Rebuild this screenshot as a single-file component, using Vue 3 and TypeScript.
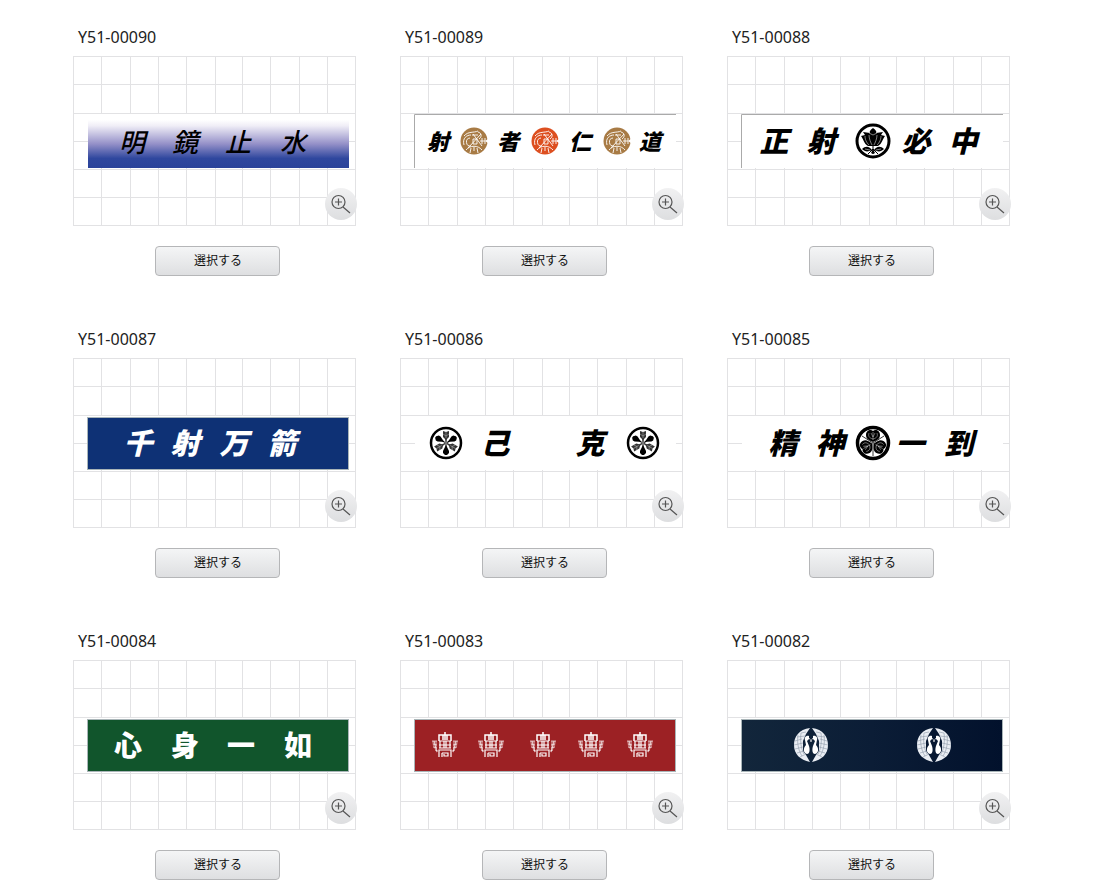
<script setup lang="ts">
type CrestKind = 'seal' | 'tachibana' | 'arrows' | 'aoi' | 'temple' | 'cranes'

interface Glyph {
  char: string
  x: number
}

interface Crest {
  kind: CrestKind
  x: number
  color?: string
}

interface Design {
  id: string
  band: 'fade' | 'outline' | 'blue' | 'plain' | 'green' | 'red' | 'navy'
  tone: 'ink' | 'paper'
  brush: 'thin' | 'small' | 'bold' | 'upright'
  glyphs: Glyph[]
  crests: Crest[]
}

function row(chars: string, xs: number[]): Glyph[] {
  return [...chars].map((char, i) => ({ char, x: xs[i] }))
}

const designs: Design[] = [
  { id: 'Y51-00090', band: 'fade', tone: 'ink', brush: 'thin', glyphs: row('明鏡止水', [59, 112, 165, 220]), crests: [] },
  {
    id: 'Y51-00089', band: 'outline', tone: 'ink', brush: 'small',
    glyphs: row('射者仁道', [38, 108, 180, 250]),
    crests: [
      { kind: 'seal', x: 74, color: '#a87b45' },
      { kind: 'seal', x: 145, color: '#dd4f20' },
      { kind: 'seal', x: 217, color: '#a87b45' },
    ],
  },
  { id: 'Y51-00088', band: 'outline', tone: 'ink', brush: 'bold', glyphs: row('正射必中', [47, 94, 189, 236]), crests: [{ kind: 'tachibana', x: 146 }] },
  { id: 'Y51-00087', band: 'blue', tone: 'paper', brush: 'bold', glyphs: row('千射万箭', [65, 112, 161, 209]), crests: [] },
  { id: 'Y51-00086', band: 'plain', tone: 'ink', brush: 'bold', glyphs: row('己克', [95, 190]), crests: [{ kind: 'arrows', x: 46 }, { kind: 'arrows', x: 243 }] },
  { id: 'Y51-00085', band: 'plain', tone: 'ink', brush: 'bold', glyphs: row('精神一到', [56, 103, 183, 232]), crests: [{ kind: 'aoi', x: 146 }] },
  { id: 'Y51-00084', band: 'green', tone: 'paper', brush: 'upright', glyphs: row('心身一如', [55, 112, 168, 225]), crests: [] },
  {
    id: 'Y51-00083', band: 'red', tone: 'paper', brush: 'bold', glyphs: [],
    crests: [45, 91, 143, 191, 240].map((x) => ({ kind: 'temple' as const, x })),
  },
  { id: 'Y51-00082', band: 'navy', tone: 'paper', brush: 'bold', glyphs: [], crests: [{ kind: 'cranes', x: 84 }, { kind: 'cranes', x: 207 }] },
]

const gridX = [0, 28, 57, 85, 113, 142, 169, 197, 226, 254, 282]
const gridY = [0, 28, 57, 85, 113, 141, 169]
const fills: Record<string, string> = { fade: 'url(#fade)', blue: '#0e3175', green: '#11552c', red: '#9c2124', navy: 'url(#navy)' }
</script>

<template>
  <main class="catalog">
    <svg class="defs" aria-hidden="true">
      <defs>
        <linearGradient id="fade" x1="0" y1="0" x2="0" y2="1">
          <stop offset="0" stop-color="#ffffff" />
          <stop offset="0.12" stop-color="#f0eef7" />
          <stop offset="0.5" stop-color="#9490c8" />
          <stop offset="0.8" stop-color="#2f479e" />
          <stop offset="1" stop-color="#2b439a" />
        </linearGradient>
        <linearGradient id="navy" x1="0" y1="0" x2="1" y2="0">
          <stop offset="0" stop-color="#12263b" />
          <stop offset="0.5" stop-color="#0b1d36" />
          <stop offset="1" stop-color="#02112c" />
        </linearGradient>

        <symbol id="seal" viewBox="-18 -18 36 36" overflow="visible">
          <circle r="13.5" fill="currentColor" />
          <g fill="none" stroke="#fff" stroke-width="0.9">
            <path d="M-10-5C-6-10 0-8 4-10M-10 4C-12-3-7-6-3-6M4-9C8-8 8-4 5-2M-1-7 8 5M7-7-6 7M-2-6H4" />
            <path d="M-4-3A4 4 0 1 0-3 5" />
            <path d="M-8 9C-4 4 4 4 8 9M-3 7-4 12M0 6V10M3 7 4 12M8-3V3M11-3V3M6 0H11" />
            <path d="M-1-2H3V3H-1Z" />
          </g>
          <path d="M14-2 11 0 14 2Z" fill="#fff" />
        </symbol>

        <symbol id="tachibana" viewBox="-18 -18 36 36" overflow="visible">
          <circle r="16" fill="#fff" stroke="#000" stroke-width="3" />
          <path d="M0-13C3-11 4-9 3-8L10-9 8-6 12-5C10-3 9 3 5 5H-5C-9 3-10-3-12-5L-8-6-10-9-3-8C-4-9-3-11 0-13Z" />
          <path d="M-11 8C-7 4-3 6-1 9-5 11-8 11-11 8ZM11 8C7 4 3 6 1 9 5 11 8 11 11 8ZM-2 12 0 8 2 12 0 13Z" />
          <path d="M0 4V13M-5 13 0 8 5 13" fill="none" stroke="#000" />
          <path d="M-8-5C-8 0-5 3-4 4M-4-6C-4-2-2 2-1 4M4-6C4-2 2 2 1 4M8-5C8 0 5 3 4 4M-4-8 0-6 4-8M-8 8-3 9M8 8 3 9" fill="none" stroke="#fff" stroke-width="0.5" />
        </symbol>

        <symbol id="arrows" viewBox="-18 -18 36 36" overflow="visible">
          <circle r="15" fill="#fff" stroke="#000" stroke-width="2.5" />
          <g v-for="a in [0, 120, 240]" :key="a" :transform="`rotate(${a})`">
            <path d="M-0.5-1-1-4-3-6V-12L0-11 3-12V-6L1-4 0.500-1Z" fill="#333" />
            <path d="M0-11V-5M-3-9 0-7 3-9" fill="none" stroke="#bbb" stroke-width="0.5" />
            <path d="M0 0-1 4-3 8-3 10-1 12H1L3 10 3 8 1 4Z" />
          </g>
          <circle r="1" fill="#fff" stroke="#000" stroke-width="0.6" />
        </symbol>

        <symbol id="aoi" viewBox="-18 -18 36 36" overflow="visible">
          <circle r="15.5" fill="#fff" stroke="#000" stroke-width="3.5" />
          <g v-for="a in [0, 120, 240]" :key="a" :transform="`rotate(${a})`">
            <path d="M0-12C2-14 7-13 7-8 7-4 4-3 0-1-4-3-7-4-7-8-7-13-2-14 0-12Z" />
            <path d="M0-3V-11M0-4C-4-5-5-7-4-10M0-4C4-5 5-7 4-10M0-6-2-10M0-6 2-10" fill="none" stroke="#fff" stroke-width="0.4" />
          </g>
          <path d="M0 0V13M0 0 11-7M0 0-11-7" fill="none" stroke="#000" stroke-width="0.8" />
        </symbol>

        <symbol id="temple" viewBox="-18 -18 36 36" overflow="visible">
          <g fill="none" stroke="#fff">
            <path d="M-13-4H-8V8L-12 1ZM13-4H8V8L12 1Z" fill="#fff" fill-opacity="0.35" stroke="none" />
            <path d="M-13-4H-8M-12-1-8 0M-12 2-8 3M-10 5-7 6M-11-4-8 7M13-4H8M12-1 8 0M12 2 8 3M10 5 7 6M11-4 8 7" stroke-width="0.8" opacity="0.8" />
            <path d="M0-13V-5M-6-4V-10H6V-4M-2-10V-5M2-10V-5" stroke-width="1.5" />
            <path d="M-6-4H6M-6 0H6M-6 3H6M-5-4V3M-1-4V3M1-4V3M5-4V3M-6 12V5H6V12M-3 8H3V11H-1V9M-3 8V12" stroke-width="1.2" />
          </g>
        </symbol>

        <symbol id="cranes" viewBox="-18 -18 36 36" overflow="visible">
          <g v-for="s in [1, -1]" :key="s" :transform="`scale(${s} 1)`">
            <path d="M-1-17C-12-16-17-8-17 0-17 9-11 15-1 17L-5 10-8 6V-4L-5-11Z" fill="#e9edf3" />
            <path d="M-16-4-9-6M-17 0-8-2M-16 4-8 2M-14 8-7 6M-11 12-5 9M-14-8-6-9M-10-12-5-13M-13-10C-14-3-13 5-9 11M-10-12C-11-4-10 4-7 9" fill="none" stroke="#8d98a8" stroke-width="0.6" />
            <path d="M-2-9C-5-10-7-7-6-5L-5 0C-8 3-8 8-4 9-1 9-1 4-2 1L-4-4-2-6Z" fill="#fff" />
            <path d="M-3-8-1-6 0-3" fill="none" stroke="#fff" stroke-width="0.6" />
          </g>
        </symbol>
      </defs>
    </svg>

    <article v-for="design in designs" :key="design.id" class="card">
      <h2 class="code">{{ design.id }}</h2>
      <div class="preview">
        <svg class="artwork" viewBox="0 0 283 170" role="img" :aria-label="design.id">
          <g class="grid">
            <rect v-for="x in gridX" :key="`x${x}`" :x="x" y="0" width="1" height="170" />
            <rect v-for="y in gridY" :key="`y${y}`" x="0" :y="y" width="283" height="1" />
          </g>
          <rect x="1" y="58" width="281" height="54" fill="#fff" />
          <path class="grid" d="M0 85H15V86H0ZM276 85H283V86H276Z" />
          <rect v-if="design.band === 'fade'" x="15" y="64" width="261" height="48" :fill="fills.fade" />
          <rect v-else-if="fills[design.band]" class="cloth" x="14.5" y="59.5" width="261" height="52" :fill="fills[design.band]" />
          <path v-else-if="design.band === 'outline'" class="edge" d="M14.5 112V58.5H276" />
          <text
            v-for="glyph in design.glyphs"
            :key="glyph.x"
            :class="['brush', design.brush, design.tone]"
            :x="glyph.x"
            :y="design.brush === 'small' ? 94 : 96"
          >{{ glyph.char }}</text>
          <use
            v-for="crest in design.crests"
            :key="crest.x"
            :href="`#${crest.kind}`"
            :x="crest.x - 18"
            y="67"
            width="36"
            height="36"
            :color="crest.color"
          />
        </svg>
        <button class="zoom" type="button" :aria-label="`${design.id} 拡大`">
          <svg viewBox="0 0 32 32" width="32" height="32" aria-hidden="true">
            <circle cx="13.5" cy="14" r="6.5" />
            <path d="M10 14H17M13.5 10.5V17.5M18 19 25 25" />
          </svg>
        </button>
      </div>
      <button class="select" type="button">選択する</button>
    </article>
  </main>
</template>

<style>
body {
  margin: 0;
  background: #fff;
}
</style>

<style scoped>
.catalog {
  display: grid;
  grid-template-columns: repeat(3, 1fr);
  column-gap: 38px;
  row-gap: 50px;
  padding: 24px 81px 14px 73px;
  font-family: "Noto Sans", "Noto Sans CJK JP", sans-serif;
  color: #222;
}
.defs {
  position: absolute;
  width: 0;
  height: 0;
}
.card {
  display: flex;
  flex-direction: column;
  align-items: center;
}
.code {
  align-self: stretch;
  margin: 0 0 6px;
  padding-left: 5px;
  font-size: 16px;
  line-height: 26px;
  font-weight: 400;
}
.preview {
  position: relative;
  align-self: stretch;
  margin: 0 6px 20px 0;
}
.artwork {
  display: block;
  width: 100%;
}
.grid {
  fill: #e2e2e4;
}
.cloth {
  stroke: #a9b5b8;
  stroke-width: 1;
}
.edge {
  fill: none;
  stroke: #aaa;
}
.brush {
  font-family: "Noto Sans CJK JP", sans-serif;
  font-size: 29px;
  font-weight: 900;
  font-style: italic;
  text-anchor: middle;
}
.thin {
  font-size: 26px;
  font-weight: 500;
}
.small {
  font-size: 22px;
}
.upright {
  font-size: 28px;
  font-style: normal;
}
.ink {
  fill: #000;
}
.paper {
  fill: #fff;
}
.zoom {
  position: absolute;
  right: -1px;
  bottom: 6px;
  width: 32px;
  height: 32px;
  padding: 0;
  border: 0;
  border-radius: 50%;
  background: linear-gradient(#f1f1f2, #dddee0);
  cursor: pointer;
}
.zoom svg {
  display: block;
  fill: none;
  stroke: #555;
  stroke-width: 1.2;
}
.select {
  width: 125px;
  height: 30px;
  padding: 0 0 2px 1px;
  border: 1px solid #b5b6b8;
  border-radius: 4px;
  background: linear-gradient(#f4f5f6, #dedfe1);
  font-family: "Noto Sans CJK JP", sans-serif;
  font-size: 12px;
  line-height: 26px;
  color: #111;
  cursor: pointer;
}
</style>
